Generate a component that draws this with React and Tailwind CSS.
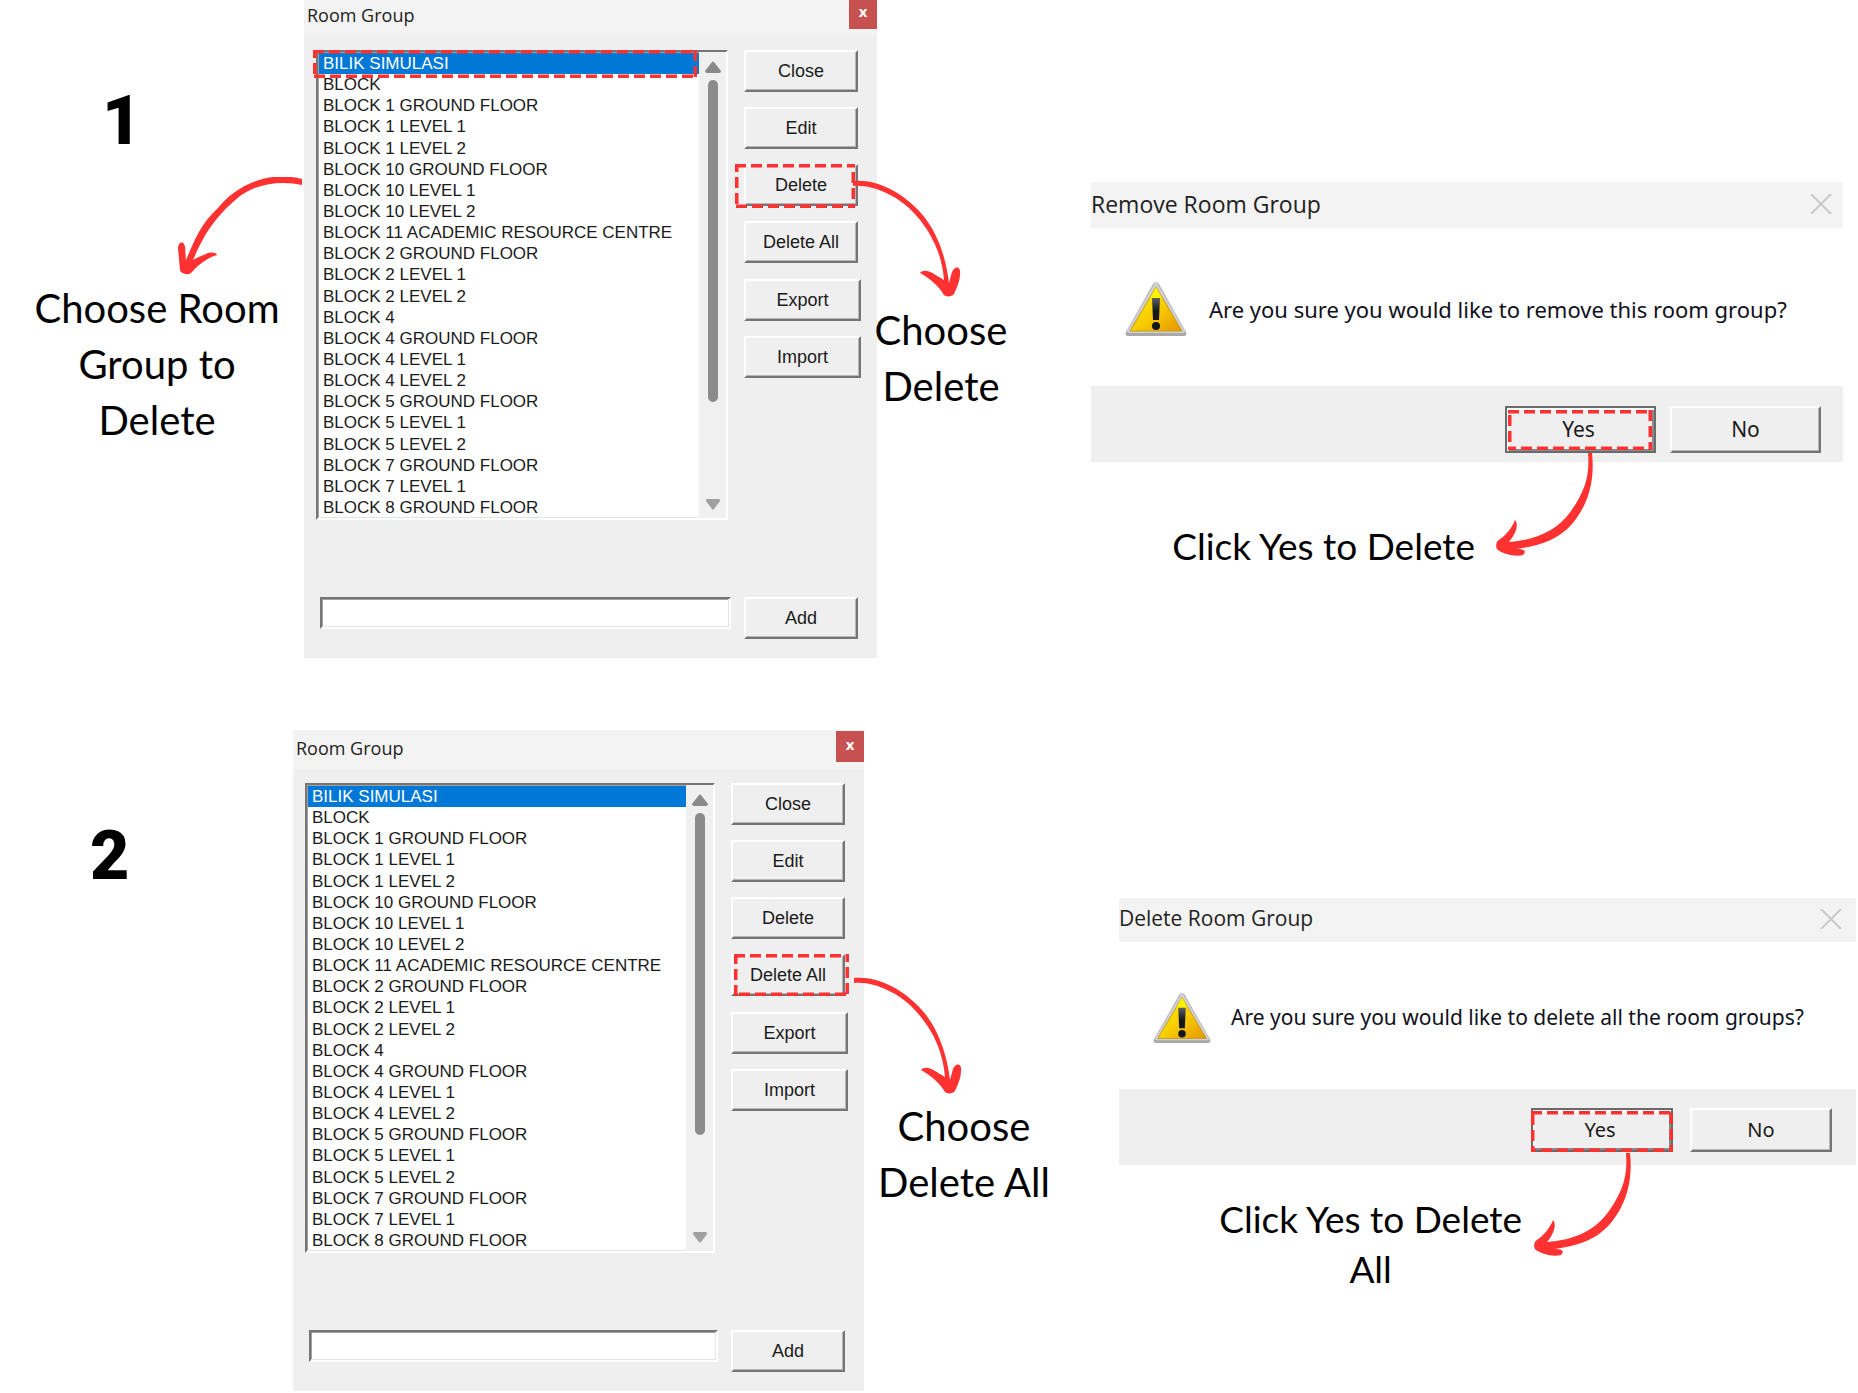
import clsx from 'clsx';

const rooms = [
  'BILIK SIMULASI',
  'BLOCK',
  'BLOCK 1 GROUND FLOOR',
  'BLOCK 1 LEVEL 1',
  'BLOCK 1 LEVEL 2',
  'BLOCK 10 GROUND FLOOR',
  'BLOCK 10 LEVEL 1',
  'BLOCK 10 LEVEL 2',
  'BLOCK 11 ACADEMIC RESOURCE CENTRE',
  'BLOCK 2 GROUND FLOOR',
  'BLOCK 2 LEVEL 1',
  'BLOCK 2 LEVEL 2',
  'BLOCK 4',
  'BLOCK 4 GROUND FLOOR',
  'BLOCK 4 LEVEL 1',
  'BLOCK 4 LEVEL 2',
  'BLOCK 5 GROUND FLOOR',
  'BLOCK 5 LEVEL 1',
  'BLOCK 5 LEVEL 2',
  'BLOCK 7 GROUND FLOOR',
  'BLOCK 7 LEVEL 1',
  'BLOCK 8 GROUND FLOOR',
];

const actions = ['Close', 'Edit', 'Delete', 'Delete All', 'Export', 'Import'];

// Red dashed frame laid over the control to click
function Highlight({ className }) {
  return (
    <svg className={clsx('absolute pointer-events-none z-10', className)} aria-hidden="true">
      <rect width="100%" height="100%" fill="none" stroke="#ff3131" strokeWidth="7" strokeDasharray="11 5" />
    </svg>
  );
}

function ArrowDownLeft() {
  return (
    <svg className="block w-32 h-[98px]" viewBox="0 0 128 98" fill="#ff3131" aria-hidden="true">
      <path d="M126 2 C88 -8 56 13 42 31 C24 47 17 67 10 83 C9 76 10 70 8 67 C6 64 2 66 2 71 L4 93 C5 97 13 99 16 95 C24 86 33 80 41 78 C40 75 34 75 30 77 C25 79 20 81 17 83 C27 60 38 40 64 19 C83 5 108 4 126 8 Z" />
    </svg>
  );
}

function ArrowDownRight() {
  return (
    <svg className="block w-[110px] h-[121px]" viewBox="0 0 110 121" fill="#ff3131" aria-hidden="true">
      <path d="M0 5 C26 3 48 18 60 29 C84 50 93 82 96 107 C98 101 98 96 101 93 C104 90 108 92 107 98 C107 105 104 111 101 118 C99 121 93 121 91 119 C86 110 76 102 67 97 C70 93 77 95 81 98 L91 104 C89 78 78 54 58 34 C46 22 22 8 0 10 Z" />
    </svg>
  );
}

function ArrowCurveLeft() {
  return (
    <svg className="block shrink-0 w-[102px] h-[104px]" viewBox="0 0 102 104" fill="#ff3131" aria-hidden="true">
      <path d="M93 0 L97 0 C101 37 87 59 77 71 C62 88 43 93 21 96 C27 96 33 97 28 102 C20 104 9 101 3 97 C0 95 1 88 4 87 C11 82 17 75 20 67 C24 71 21 81 14 89 C41 87 62 78 76 58 C90 38 95 22 93 0 Z" />
    </svg>
  );
}

function WarningIcon({ className }) {
  return (
    <svg className={clsx('shrink-0', className)} viewBox="0 0 62 56" preserveAspectRatio="none" aria-hidden="true">
      <defs>
        <linearGradient id="warn" x1="0" y1="0" x2="1" y2="1">
          <stop offset="0" stopColor="#fff200" />
          <stop offset="0.5" stopColor="#f8d000" />
          <stop offset="1" stopColor="#e89400" />
        </linearGradient>
        <linearGradient id="bang" x1="0" y1="0" x2="0" y2="1">
          <stop offset="0" stopColor="#5a5f63" />
          <stop offset="0.6" stopColor="#14161f" />
          <stop offset="1" stopColor="#14161f" />
        </linearGradient>
      </defs>
      <path d="M31 1 C29 1 28 3 27 5 L1 51 C0 53 1 55 3 55 H59 C61 55 62 53 61 51 L35 5 C34 3 33 1 31 1 Z" fill="#a9a9a9" />
      <path d="M31 1 C29 1 29 4 28 5 L2 50 C2 52 3 52 4 52 H58 C59 52 60 52 60 50 L34 5 C33 4 33 1 31 1 Z" fill="#d0d0d4" />
      <path d="M31 6 L5 50 H57 Z" fill="url(#warn)" stroke="#c79a1c" strokeWidth="1" />
      <path d="M31 6 L25 17 H37 Z" fill="#fff200" />
      <path d="M27 17 H35 L34 39 H28 Z" fill="url(#bang)" />
      <circle cx="31" cy="45" r="4" fill="#14161f" />
    </svg>
  );
}

function WinButton({ className, children }) {
  return (
    <button
      type="button"
      className={clsx(
        'border-2 border-t-white border-l-white border-r-[#757575] border-b-[#757575] bg-[#efefef] text-[#1a1a1a] shadow-[inset_-1px_-1px_0_#b5b5b5]',
        className
      )}
    >
      {children}
    </button>
  );
}

function RoomList({ highlighted }) {
  return (
    <div className="relative flex h-[470px] border-2 border-t-[#757575] border-l-[#757575] border-r-white border-b-white bg-white shadow-[inset_-1px_-1px_0_#e3e3e3,inset_1px_1px_0_#a0a0a0]">
      <ul role="listbox" aria-label="Room groups" className="flex flex-1 flex-col pt-px pl-px text-[17px] leading-5">
        {rooms.map((room, i) => (
          <li
            key={room}
            role="option"
            aria-selected={i === 0}
            className={clsx('flex-1 pt-px pl-1 whitespace-nowrap', i === 0 ? 'bg-[#0078d7] text-white' : 'text-[#1a1a1a]')}
          >
            {room}
          </li>
        ))}
      </ul>
      <div className="flex w-[27px] flex-col items-center bg-[#f0f0f0] pt-[9px] pb-2">
        <svg className="h-3 w-4" viewBox="0 0 16 12" fill="#8a8a8a" aria-hidden="true">
          <path d="M7 1 Q8 0 9 1 L16 10 Q16 12 14 12 H2 Q0 12 0 10 Z" />
        </svg>
        <div className="mt-[7px] h-[322px] w-[10px] rounded-full bg-[#8b8b8b]" />
        <svg className="mt-auto h-[11px] w-3.5" viewBox="0 0 14 11" fill="#a0a0a0" aria-hidden="true">
          <path d="M1 0 H13 Q14 0 14 2 L8 10 Q7 11 6 10 L0 2 Q0 0 1 0 Z" />
        </svg>
      </div>
      {highlighted && <Highlight className="-top-0.5 -left-[5px] h-7 w-[384px]" />}
    </div>
  );
}

function RoomGroupWindow({ className, target, targetFrame, highlightRow }) {
  return (
    <div className={clsx('shrink-0 bg-[#efefef]', className)}>
      <div className="flex h-[39px] items-start justify-between bg-[#f3f3f3] pl-[3px]">
        <h2 className="pt-1.5 font-['Open_Sans',sans-serif] text-[18px] leading-6 text-[#222]">Room Group</h2>
        <button
          type="button"
          aria-label="Close window"
          className="mt-px h-[31px] w-7 bg-[#c75050] pb-1 font-['Open_Sans',sans-serif] text-[15px] font-bold leading-none text-white"
        >
          x
        </button>
      </div>
      <div className="grid grid-cols-[1fr_117px] items-start gap-x-4 pt-3.5 pr-4 pb-[19px] pl-3">
        <RoomList highlighted={highlightRow} />
        <div className="flex flex-col items-start gap-[15px] text-[18px]">
          {actions.map((label) => (
            <div key={label} className={clsx('relative', label === 'Export' && 'mt-px')}>
              <WinButton
                className={clsx('h-[42px]', label === 'Export' || label === 'Import' ? 'w-[117px]' : 'w-[114px]')}
              >
                {label}
              </WinButton>
              {label === target && <Highlight className={targetFrame} />}
            </div>
          ))}
        </div>
        <div className="mt-[77px] -mr-[3px] ml-1">
          <input
            type="text"
            aria-label="New room group"
            className="block h-8 w-full border-2 border-t-[#757575] border-l-[#757575] border-r-white border-b-white bg-white px-1 text-[17px] shadow-[inset_-1px_-1px_0_#e3e3e3,inset_1px_1px_0_#a0a0a0] outline-none"
          />
        </div>
        <WinButton className="mt-[77px] h-[42px] w-[114px] text-[18px]">Add</WinButton>
      </div>
    </div>
  );
}

function ConfirmDialog({ title, message, size, frame }) {
  const large = size === 'lg';
  return (
    <div role="dialog" aria-label={title} className="bg-white font-['Noto_Sans',sans-serif]">
      <div className={clsx('flex items-center justify-between bg-[#f3f3f3] pb-0.5', large ? 'h-[46px] pr-[11px]' : 'h-11 pr-[14px]')}>
        <h2 className={clsx("font-['Open_Sans',sans-serif] text-[#222]", large ? 'text-[23px]' : 'text-[21px]')}>{title}</h2>
        <button type="button" aria-label="Close dialog">
          <svg className="h-5 w-[22px]" viewBox="0 0 22 20" stroke="#c8c8c8" strokeWidth="2" fill="none" aria-hidden="true">
            <path d="M1 0 L21 20 M21 0 L1 20" />
          </svg>
        </button>
      </div>
      <div className={clsx('flex items-center pt-1 pl-[34px]', large ? 'h-[158px]' : 'h-[147px]')}>
        <WarningIcon className={large ? 'h-14 w-[62px]' : 'h-[52px] w-[58px]'} />
        <p className={clsx('whitespace-nowrap text-[#101020]', large ? 'pl-[22px] text-[22px]' : 'pl-5 text-[21px]')}>
          {message}
        </p>
      </div>
      <div
        className={clsx(
          'flex h-[76px] items-start justify-end bg-[#efefef]',
          large ? 'gap-3.5 pt-5 pr-[22px] text-[21px]' : 'gap-[17px] pt-[19px] pr-6 text-[20px]'
        )}
      >
        <div className="relative">
          <button
            type="button"
            className={clsx(
              'block border-2 border-[#6b6b6b] bg-[#efefef] pr-1 text-[#1a1a1a] shadow-[inset_2px_2px_0_#fff,inset_-2px_-2px_0_#8a8a8a]',
              large ? 'h-[47px] w-[151px]' : 'h-11 w-[142px]'
            )}
          >
            Yes
          </button>
          <Highlight className={frame} />
        </div>
        <WinButton className={large ? 'h-[47px] w-[151px]' : 'h-11 w-[142px]'}>No</WinButton>
      </div>
    </div>
  );
}

function Caption({ lines, className }) {
  return (
    <p className={clsx("text-center font-['Lato',sans-serif] whitespace-nowrap text-black", className)}>
      {lines.map((line) => (
        <span key={line} className="block">{line}</span>
      ))}
    </p>
  );
}

function StepNumber({ children, className }) {
  return (
    <div className={clsx("font-['Roboto',sans-serif] text-[68px] leading-[68px] font-black text-black", className)}>
      {children}
    </div>
  );
}

export default function App() {
  return (
    <main className="flex min-h-screen flex-col gap-[72px] overflow-hidden bg-white font-['Liberation_Sans',Arial,sans-serif]">
      <section className="flex items-start">
        <div className="w-[304px] shrink-0 pt-[87px]">
          <StepNumber className="pl-[102px]">1</StepNumber>
          <div className="mt-[22px] flex justify-end">
            <ArrowDownLeft />
          </div>
          <Caption className="mt-[5px] pr-2.5 pl-5 text-[40px] leading-14" lines={['Choose Room', 'Group to', 'Delete']} />
        </div>
        <RoomGroupWindow
          className="-mt-[3px] w-[573px]"
          target="Delete"
          targetFrame="top-0 -left-[9px] h-11 w-[120px]"
          highlightRow
        />
        <div className="z-10 -ml-6 w-44 shrink-0 pt-44">
          <ArrowDownRight />
          <Caption className="mt-[5px] text-[40px] leading-14" lines={['Choose', 'Delete']} />
        </div>
        <div className="mr-[15px] ml-[62px] flex-1 pt-[182px]">
          <ConfirmDialog
            size="lg"
            title="Remove Room Group"
            message="Are you sure you would like to remove this room group?"
            frame="top-1 left-[3px] h-10 w-36"
          />
          <div className="relative z-10 -mt-[9px] flex items-start justify-end gap-5 pr-[246px]">
            <Caption className="mt-[68px] text-[37px] leading-[50px]" lines={['Click Yes to Delete']} />
            <ArrowCurveLeft />
          </div>
        </div>
      </section>

      <section className="flex items-start">
        <div className="w-[293px] shrink-0 pt-[92px]">
          <StepNumber className="pl-[90px]">2</StepNumber>
        </div>
        <RoomGroupWindow
          className="w-[571px]"
          target="Delete All"
          targetFrame="top-0 left-[3px] h-[42px] w-[115px]"
        />
        <div className="z-10 -ml-2.5 w-[220px] shrink-0 pt-[243px]">
          <ArrowDownRight />
          <Caption className="mt-1 text-[40px] leading-14" lines={['Choose', 'Delete All']} />
        </div>
        <div className="mr-0.5 ml-[45px] flex-1 pt-[168px]">
          <ConfirmDialog
            size="md"
            title="Delete Room Group"
            message="Are you sure you would like to delete all the room groups?"
            frame="top-[3px] left-0 h-[41px] w-[142px]"
          />
          <div className="relative z-10 -mt-3 flex items-start justify-end gap-[11px] pr-[221px]">
            <Caption className="mt-[41px] text-[37px] leading-[50px]" lines={['Click Yes to Delete', 'All']} />
            <ArrowCurveLeft />
          </div>
        </div>
      </section>
    </main>
  );
}
